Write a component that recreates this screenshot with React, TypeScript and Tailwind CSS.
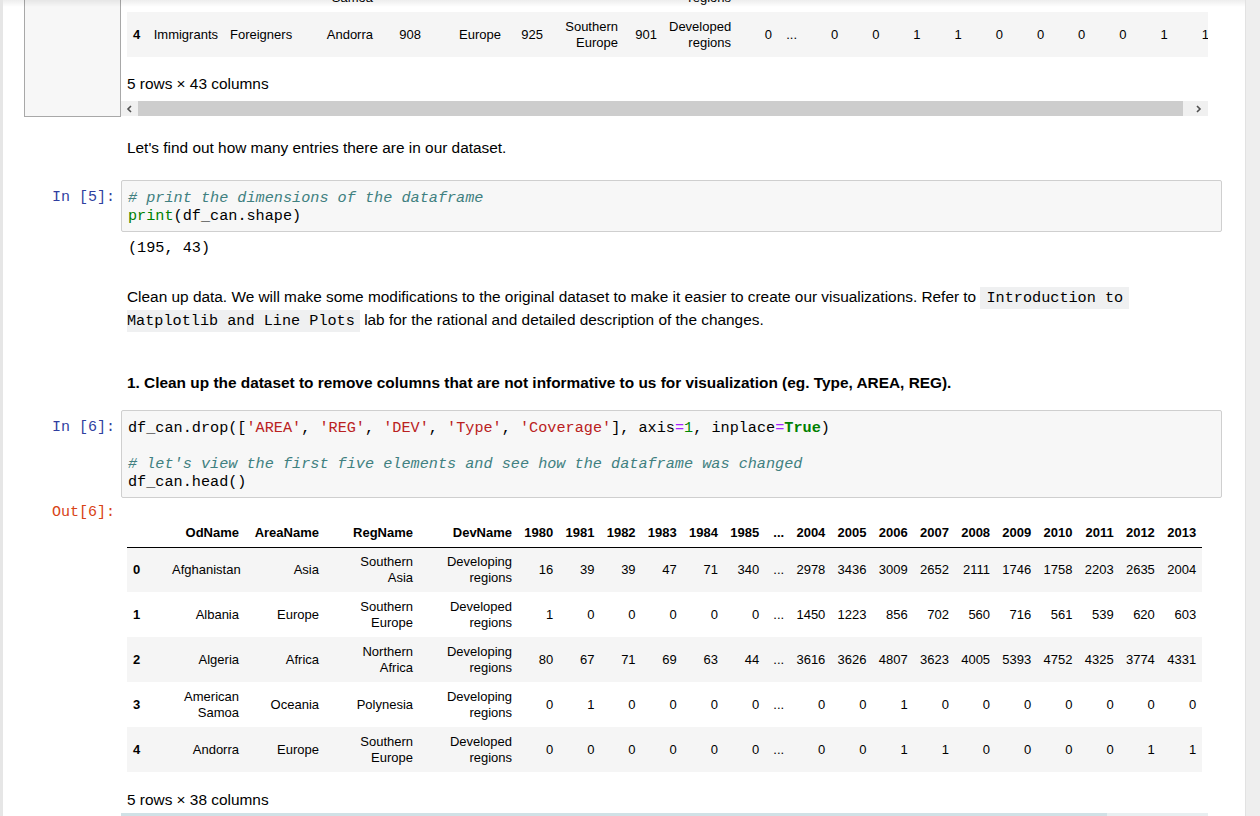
import React from "react";

const sans = "font-['Liberation_Sans',Arial,sans-serif]";
const mono = "font-['Liberation_Mono','Courier_New',monospace]";

type Cell = string;

const t1Cols = [
  "w-[20px]", "w-[77px]", "w-[74px]", "w-[81px]", "w-[48px]", "w-[80px]", "w-[42px]", "w-[75px]", "w-[39px]", "w-[74px]", "w-[41px]", "w-[25px]",
  "w-[41.2px]", "w-[41.2px]", "w-[41.2px]", "w-[41.2px]", "w-[41.2px]", "w-[41.2px]", "w-[41.2px]", "w-[41.2px]", "w-[41.2px]", "w-[41.2px]",
];

const t1Rows: Cell[][] = [
  ["3", "Immigrants", "Foreigners", "American|Samoa", "909", "Oceania", "61", "Polynesia", "902", "Developing|regions", "0", "...", "0", "0", "1", "0", "0", "0", "0", "0", "0", "0"],
  ["4", "Immigrants", "Foreigners", "Andorra", "908", "Europe", "925", "Southern|Europe", "901", "Developed|regions", "0", "...", "0", "0", "1", "1", "0", "0", "0", "0", "1", "1"],
];

const t2Cols = [
  "w-[39px]", "w-[79px]", "w-[80px]", "w-[94px]", "w-[99px]",
  "w-[41.2px]", "w-[41.2px]", "w-[41.2px]", "w-[41.2px]", "w-[41.2px]", "w-[41.2px]", "w-[25px]",
  "w-[41.2px]", "w-[41.2px]", "w-[41.2px]", "w-[41.2px]", "w-[41.2px]", "w-[41.2px]", "w-[41.2px]", "w-[41.2px]", "w-[41.2px]", "w-[41.2px]",
];

const t2Head = ["", "OdName", "AreaName", "RegName", "DevName", "1980", "1981", "1982", "1983", "1984", "1985", "...", "2004", "2005", "2006", "2007", "2008", "2009", "2010", "2011", "2012", "2013"];

const t2Rows: Cell[][] = [
  ["0", "Afghanistan", "Asia", "Southern|Asia", "Developing|regions", "16", "39", "39", "47", "71", "340", "...", "2978", "3436", "3009", "2652", "2111", "1746", "1758", "2203", "2635", "2004"],
  ["1", "Albania", "Europe", "Southern|Europe", "Developed|regions", "1", "0", "0", "0", "0", "0", "...", "1450", "1223", "856", "702", "560", "716", "561", "539", "620", "603"],
  ["2", "Algeria", "Africa", "Northern|Africa", "Developing|regions", "80", "67", "71", "69", "63", "44", "...", "3616", "3626", "4807", "3623", "4005", "5393", "4752", "4325", "3774", "4331"],
  ["3", "American|Samoa", "Oceania", "Polynesia", "Developing|regions", "0", "1", "0", "0", "0", "0", "...", "0", "0", "1", "0", "0", "0", "0", "0", "0", "0"],
  ["4", "Andorra", "Europe", "Southern|Europe", "Developed|regions", "0", "0", "0", "0", "0", "0", "...", "0", "0", "1", "1", "0", "0", "0", "0", "1", "1"],
];

function Lines({ v }: { v: string }) {
  const parts = v.split("|");
  return (
    <>
      {parts.map((p, i) => (
        <React.Fragment key={i}>
          {i > 0 && <br />}
          {p}
        </React.Fragment>
      ))}
    </>
  );
}

function DataRows({ rows, startOdd }: { rows: Cell[][]; startOdd: boolean }) {
  return (
    <tbody>
      {rows.map((r, ri) => {
        const grey = startOdd ? ri % 2 === 1 : ri % 2 === 0;
        return (
          <tr key={ri} className={`h-[45px] ${grey ? "bg-[#f5f5f5]" : "bg-white"}`}>
            {r.map((c, ci) =>
              ci === 0 ? (
                <th key={ci} className="px-[6px] text-left font-bold align-middle">
                  {c}
                </th>
              ) : (
                <td key={ci} className="px-[6px] text-right align-middle whitespace-nowrap">
                  <Lines v={c} />
                </td>
              )
            )}
          </tr>
        );
      })}
    </tbody>
  );
}

function ChevLeft() {
  return (
    <svg width="7" height="8" viewBox="0 0 7 8">
      <path d="M5 1 L2 4 L5 7" stroke="#505050" strokeWidth="1.6" fill="none" />
    </svg>
  );
}
function ChevRight() {
  return (
    <svg width="7" height="8" viewBox="0 0 7 8">
      <path d="M2 1 L5 4 L2 7" stroke="#505050" strokeWidth="1.6" fill="none" />
    </svg>
  );
}

function Prompt({ children, color }: { children?: React.ReactNode; color: string }) {
  return (
    <div className={`w-[118px] shrink-0 pr-[6px] text-right text-[15px] leading-[18px] ${mono} ${color}`}>
      {children}
    </div>
  );
}

export default function App() {
  return (
    <div className={`flex w-[1260px] h-[816px] overflow-hidden bg-white text-black ${sans}`}>
      <div className="w-[3px] shrink-0 bg-[#e6e6e6]" />
      <div className="relative w-[1242px] shrink-0">
        {/* header shadow */}
        <div className="absolute top-0 left-0 right-0 h-[7px] bg-linear-to-b from-[rgba(0,0,0,0.07)] to-transparent z-10" />

        {/* Top scrolled output */}
        <div className="flex">
          <div className="w-[118px] shrink-0 flex justify-end">
            <div className="w-[97px] h-[117px] bg-[#f7f7f7] border border-t-0 border-[#a8a8a8]" />
          </div>
          <div className="w-[1087px] shrink-0 flex flex-col">
            <div className="h-[57px] overflow-hidden pl-[6px]">
              <table className="table-fixed w-[1086px] border-collapse text-[13px] leading-[16px] mt-[-33px]">
                <colgroup>
                  {t1Cols.map((w, i) => (
                    <col key={i} className={w} />
                  ))}
                </colgroup>
                <DataRows rows={t1Rows} startOdd={true} />
              </table>
            </div>
            <div className="pl-[6px] mt-[18px] text-[15.4px] leading-[18px]">5 rows × 43 columns</div>
            <div className="mt-[8px] h-[15px] flex bg-[#f0f0f0]">
              <div className="w-[17px] flex items-center justify-center">
                <ChevLeft />
              </div>
              <div className="w-[1045px] bg-[#cdcdcd]" />
              <div className="flex-1 flex items-center justify-end pr-[6px]">
                <ChevRight />
              </div>
            </div>
          </div>
        </div>

        {/* markdown */}
        <div className="flex mt-[22px]">
          <Prompt color="" />
          <div className="pl-[6px] text-[15.4px] leading-[18px]">Let's find out how many entries there are in our dataset.</div>
        </div>

        {/* code cell 5 */}
        <div className="flex mt-[23px]">
          <Prompt color="text-[#303f9f]">
            <div className="pt-[9px]">In&nbsp;[5]:</div>
          </Prompt>
          <div className={`w-[1101px] bg-[#f7f7f7] border border-[#cfcfcf] rounded-[2px] px-[6px] pt-[8px] pb-[6px] text-[15.2px] leading-[18px] whitespace-pre ${mono}`}>
            <div className="italic text-[#408080]"># print the dimensions of the dataframe</div>
            <div>
              <span className="text-[#008000]">print</span>(df_can.shape)
            </div>
          </div>
        </div>

        {/* output */}
        <div className="flex mt-[7px]">
          <Prompt color="" />
          <div className={`pl-[7px] text-[15.2px] leading-[18px] whitespace-pre ${mono}`}>(195, 43)</div>
        </div>

        {/* markdown clean up */}
        <div className="flex mt-[28px]">
          <Prompt color="" />
          <div className="pl-[6px] text-[15.4px] leading-[23px]">
            Clean up data. We will make some modifications to the original dataset to make it easier to create our visualizations. Refer to{" "}
            <span className={`bg-[#eff0f1] px-[6px] py-[2px] text-[15.2px] leading-[16px] ${mono}`}>Introduction to</span>
            <br />
            <span className={`bg-[#eff0f1] pr-[5px] py-[2px] text-[15.2px] leading-[16px] ${mono}`}>Matplotlib and Line Plots</span> lab for the
            rational and detailed description of the changes.
          </div>
        </div>

        {/* heading */}
        <div className="flex mt-[43px]">
          <Prompt color="" />
          <div className="pl-[6px] text-[15.4px] leading-[18px] font-bold">
            1. Clean up the dataset to remove columns that are not informative to us for visualization (eg. Type, AREA, REG).
          </div>
        </div>

        {/* code cell 6 */}
        <div className="flex mt-[18px]">
          <Prompt color="text-[#303f9f]">
            <div className="pt-[9px]">In&nbsp;[6]:</div>
          </Prompt>
          <div className={`w-[1101px] bg-[#f7f7f7] border border-[#cfcfcf] rounded-[2px] px-[6px] pt-[8px] pb-[6px] text-[15.2px] leading-[18px] whitespace-pre ${mono}`}>
            <div>
              df_can.drop([<span className="text-[#ba2121]">'AREA'</span>, <span className="text-[#ba2121]">'REG'</span>,{" "}
              <span className="text-[#ba2121]">'DEV'</span>, <span className="text-[#ba2121]">'Type'</span>,{" "}
              <span className="text-[#ba2121]">'Coverage'</span>], axis<span className="text-[#aa22ff]">=</span>
              <span className="text-[#008800]">1</span>, inplace<span className="text-[#aa22ff]">=</span>
              <span className="text-[#008000] font-bold">True</span>)
            </div>
            <div>&nbsp;</div>
            <div className="italic text-[#408080]"># let's view the first five elements and see how the dataframe was changed</div>
            <div>df_can.head()</div>
          </div>
        </div>

        {/* out 6 */}
        <div className="flex">
          <Prompt color="text-[#d84315]">
            <div className="pt-[6px]">Out[6]:</div>
          </Prompt>
          <div className="w-[1087px] shrink-0 flex flex-col">
            <div className="pl-[6px] mt-[22px]">
              <table className="table-fixed w-[1075.2px] border-collapse text-[13px] leading-[16px]">
                <colgroup>
                  {t2Cols.map((w, i) => (
                    <col key={i} className={w} />
                  ))}
                </colgroup>
                <thead>
                  <tr className="h-[27px] border-b border-black">
                    {t2Head.map((h, i) => (
                      <th key={i} className="px-[6px] text-right font-bold align-middle whitespace-nowrap">
                        {h}
                      </th>
                    ))}
                  </tr>
                </thead>
                <DataRows rows={t2Rows} startOdd={false} />
              </table>
            </div>
            <div className="pl-[6px] mt-[19px] text-[15.4px] leading-[18px]">5 rows × 38 columns</div>
            <div className="mt-[4px] h-[15px] flex bg-[#e8eff1]">
              <div className="w-[986px] bg-[#d0e1e6]" />
            </div>
          </div>
        </div>
      </div>
      <div className="w-[15px] shrink-0 bg-[#eeeeee] border-l border-[#e2e2e2]" />
    </div>
  );
}
